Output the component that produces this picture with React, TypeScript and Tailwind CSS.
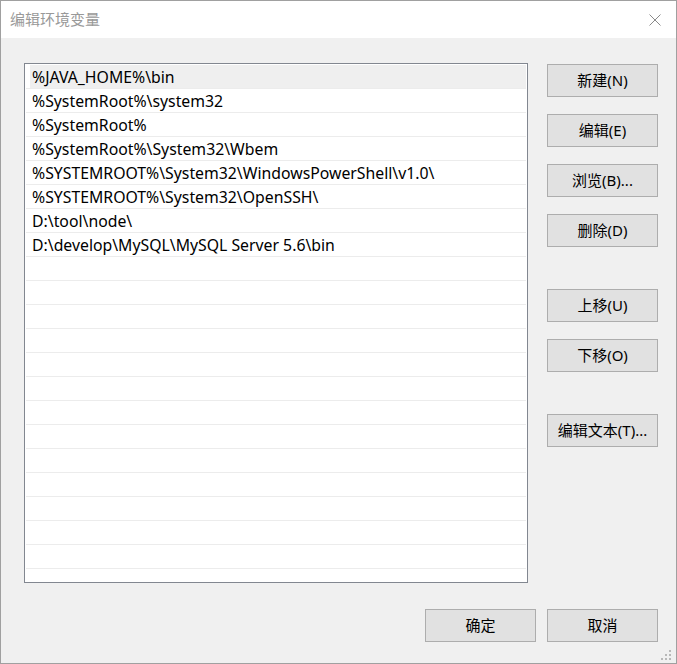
import React from 'react';

const paths = [
    '%JAVA_HOME%\\bin',
    '%SystemRoot%\\system32',
    '%SystemRoot%',
    '%SystemRoot%\\System32\\Wbem',
    '%SYSTEMROOT%\\System32\\WindowsPowerShell\\v1.0\\',
    '%SYSTEMROOT%\\System32\\OpenSSH\\',
    'D:\\tool\\node\\',
    'D:\\develop\\MySQL\\MySQL Server 5.6\\bin',
];

const rows = [...paths, ...Array(14).fill('')];

const font = { fontFamily: '"Noto Sans", "Noto Sans CJK SC", sans-serif' };

const Button = ({ label, className = '' }: { label: string; className?: string }) => (
    <button
        className={`w-[111px] h-[33px] bg-[#e1e1e1] border border-[#adadad] text-[15px] text-black flex items-center justify-center ${className}`}
    >
        {label}
    </button>
);

const App = () => {
    return (
        <div
            className="w-[677px] h-[664px] border border-[#a0a0a0] bg-[#f0f0f0] flex flex-col relative overflow-hidden"
            style={font}
        >
            {/* Title bar */}
            <div className="h-[37px] bg-white flex items-center justify-between pl-[9px] pr-[15px] shrink-0">
                <span className="text-[15px] text-[#999999]">编辑环境变量</span>
                <svg width="12" height="12" viewBox="0 0 12 12" className="mt-[1px]">
                    <path d="M0.5 0.5 L11.5 11.5 M11.5 0.5 L0.5 11.5" stroke="#8a8a8a" strokeWidth="1" />
                </svg>
            </div>

            {/* Body */}
            <div className="flex pl-[23px] pt-[25px]">
                {/* List */}
                <div className="w-[504px] h-[520px] border border-[#828790] bg-white p-[1px] overflow-hidden">
                    {rows.map((p, i) => (
                        <div key={i} className="h-[24px] border-b border-[#ececec] flex">
                            <div
                                className={`flex-1 ml-[4px] flex items-center pl-[2px] pt-[2px] text-[15.8px] text-black leading-none ${
                                    i === 0 ? 'bg-[#efefef]' : ''
                                }`}
                            >
                                {p}
                            </div>
                        </div>
                    ))}
                </div>

                {/* Side buttons */}
                <div className="flex flex-col ml-[19px] pt-[1px]">
                    <Button label="新建(N)" />
                    <Button label="编辑(E)" className="mt-[17px]" />
                    <Button label="浏览(B)..." className="mt-[17px]" />
                    <Button label="删除(D)" className="mt-[17px]" />
                    <Button label="上移(U)" className="mt-[42px]" />
                    <Button label="下移(O)" className="mt-[17px]" />
                    <Button label="编辑文本(T)..." className="mt-[42px]" />
                </div>
            </div>

            {/* Footer buttons */}
            <div className="flex justify-end gap-[11px] pr-[18px] mt-[26px]">
                <Button label="确定" />
                <Button label="取消" />
            </div>

            {/* Resize grip */}
            <svg width="12" height="12" viewBox="0 0 12 12" className="absolute right-[3px] bottom-[1px]">
                <rect x="8" y="0" width="2" height="2" fill="#b8b8b8" />
                <rect x="4" y="4" width="2" height="2" fill="#b8b8b8" />
                <rect x="8" y="4" width="2" height="2" fill="#b8b8b8" />
                <rect x="0" y="8" width="2" height="2" fill="#b8b8b8" />
                <rect x="4" y="8" width="2" height="2" fill="#b8b8b8" />
                <rect x="8" y="8" width="2" height="2" fill="#b8b8b8" />
            </svg>
        </div>
    );
};

export default App;
